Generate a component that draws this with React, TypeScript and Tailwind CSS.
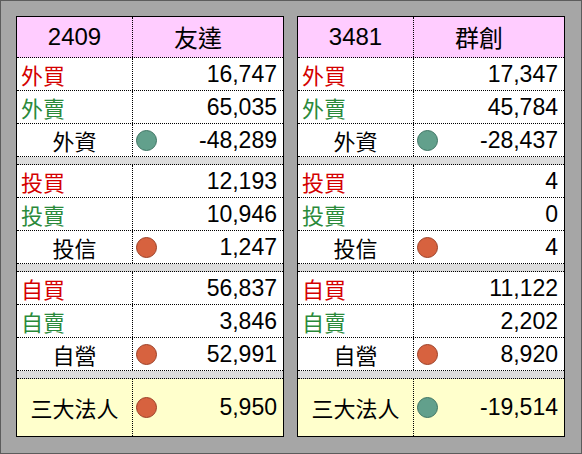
import React from "react";

type Row = { label: string; value: string; tone: "buy" | "sell" };
type Group = { rows: [Row, Row]; netLabel: string; net: string; up: boolean };

type Stock = {
  code: string;
  name: string;
  groups: Group[];
  total: string;
  totalUp: boolean;
};

const STOCKS: Stock[] = [
  {
    code: "2409",
    name: "友達",
    groups: [
      {
        rows: [
          { label: "外買", value: "16,747", tone: "buy" },
          { label: "外賣", value: "65,035", tone: "sell" },
        ],
        netLabel: "外資",
        net: "-48,289",
        up: false,
      },
      {
        rows: [
          { label: "投買", value: "12,193", tone: "buy" },
          { label: "投賣", value: "10,946", tone: "sell" },
        ],
        netLabel: "投信",
        net: "1,247",
        up: true,
      },
      {
        rows: [
          { label: "自買", value: "56,837", tone: "buy" },
          { label: "自賣", value: "3,846", tone: "sell" },
        ],
        netLabel: "自營",
        net: "52,991",
        up: true,
      },
    ],
    total: "5,950",
    totalUp: true,
  },
  {
    code: "3481",
    name: "群創",
    groups: [
      {
        rows: [
          { label: "外買", value: "17,347", tone: "buy" },
          { label: "外賣", value: "45,784", tone: "sell" },
        ],
        netLabel: "外資",
        net: "-28,437",
        up: false,
      },
      {
        rows: [
          { label: "投買", value: "4", tone: "buy" },
          { label: "投賣", value: "0", tone: "sell" },
        ],
        netLabel: "投信",
        net: "4",
        up: true,
      },
      {
        rows: [
          { label: "自買", value: "11,122", tone: "buy" },
          { label: "自賣", value: "2,202", tone: "sell" },
        ],
        netLabel: "自營",
        net: "8,920",
        up: true,
      },
    ],
    total: "-19,514",
    totalUp: false,
  },
];

const cjk = "font-['Noto_Sans_CJK_TC','Noto_Sans',sans-serif]";
const num = "font-['Liberation_Sans',Arial,sans-serif]";

function Dot({ up }: { up: boolean }) {
  return (
    <span
      className={`ml-[3px] shrink-0 h-[21px] w-[21px] rounded-full border ${
        up ? "bg-[#d7623f] border-[#9c4128]" : "bg-[#62a08c] border-[#3f7564]"
      }`}
    />
  );
}

function DataRow({ row }: { row: Row }) {
  return (
    <div className="flex h-[33px] border-b border-dotted border-black bg-white">
      <div
        className={`${cjk} w-[116px] border-r border-dotted border-black pl-[4px] flex items-center text-[22px] ${
          row.tone === "buy" ? "text-[#d40000]" : "text-[#2a8a3a]"
        }`}
      >
        {row.label}
      </div>
      <div className={`${num} flex-1 flex items-center justify-end pr-[6px] text-[23px] text-black`}>
        {row.value}
      </div>
    </div>
  );
}

function NetRow({ label, value, up }: { label: string; value: string; up: boolean }) {
  return (
    <div className="flex h-[33px] border-b border-dotted border-black bg-white">
      <div className={`${cjk} w-[116px] border-r border-dotted border-black flex items-center justify-center text-[22px] text-black`}>
        {label}
      </div>
      <div className="flex-1 flex items-center pr-[6px]">
        <Dot up={up} />
        <span className={`${num} ml-auto text-[23px] text-black`}>{value}</span>
      </div>
    </div>
  );
}

function StockTable({ stock }: { stock: Stock }) {
  return (
    <div className="w-[268px] border border-black flex flex-col">
      <div className="flex h-[41px] border-b border-dotted border-black bg-[#ffccff]">
        <div className={`${num} w-[116px] border-r border-dotted border-black flex items-center justify-center text-[24px] text-black`}>
          {stock.code}
        </div>
        <div className={`${cjk} flex-1 flex items-center justify-center pr-[20px] text-[24px] text-black`}>
          {stock.name}
        </div>
      </div>
      {stock.groups.map((g) => (
        <React.Fragment key={g.netLabel}>
          <DataRow row={g.rows[0]} />
          <DataRow row={g.rows[1]} />
          <NetRow label={g.netLabel} value={g.net} up={g.up} />
          <div className="h-[8px] border-b border-dotted border-black bg-[#dcdcdc]" />
        </React.Fragment>
      ))}
      <div className="flex flex-1 bg-[#ffffcc]">
        <div className={`${cjk} w-[116px] border-r border-dotted border-black flex items-center justify-center text-[22px] text-black`}>
          三大法人
        </div>
        <div className="flex-1 flex items-center pr-[6px]">
          <Dot up={stock.totalUp} />
          <span className={`${num} ml-auto text-[23px] text-black`}>{stock.total}</span>
        </div>
      </div>
    </div>
  );
}

export default function App() {
  return (
    <div className="w-[582px] h-[454px] bg-[#a6a6a6] border border-[#5c5c5c] pt-[15px] pl-[15px] flex gap-[13px] items-start">
      {STOCKS.map((s) => (
        <div key={s.code} className="h-[421px] flex">
          <StockTable stock={s} />
        </div>
      ))}
    </div>
  );
}
